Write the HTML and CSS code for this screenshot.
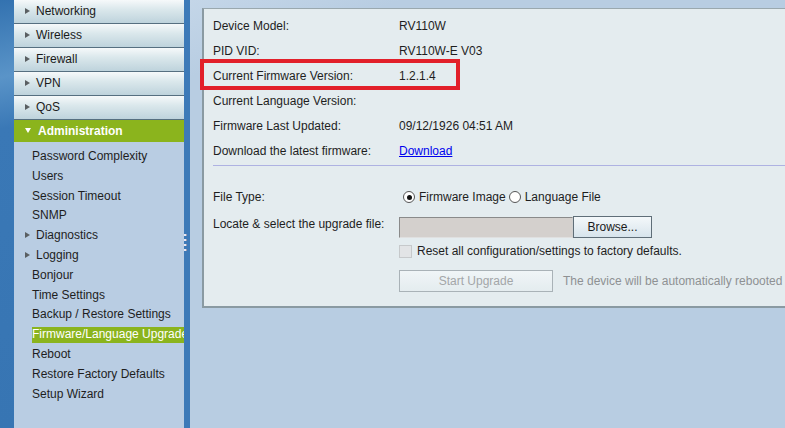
FILE: index.html
```html
<!DOCTYPE html>
<html lang="en">
<head>
    <meta charset="UTF-8">
    <title>Firmware/Language Upgrade</title>
    <link rel="stylesheet" href="styles.css">
</head>
<body>
    <div class="page">
        <div class="edge"></div>

        <!-- menu on the left -->
        <div class="nav">
            <div class="nav-head"><span class="arrow"></span>Networking</div>
            <div class="nav-head"><span class="arrow"></span>Wireless</div>
            <div class="nav-head"><span class="arrow"></span>Firewall</div>
            <div class="nav-head"><span class="arrow"></span>VPN</div>
            <div class="nav-head"><span class="arrow"></span>QoS</div>
            <div class="nav-head open"><span class="arrow down"></span>Administration</div>
            <ul class="sub">
                <li>Password Complexity</li>
                <li>Users</li>
                <li>Session Timeout</li>
                <li>SNMP</li>
                <li class="folder"><span class="arrow"></span>Diagnostics</li>
                <li class="folder"><span class="arrow"></span>Logging</li>
                <li>Bonjour</li>
                <li>Time Settings</li>
                <li>Backup / Restore Settings</li>
                <li class="current">Firmware/Language Upgrade</li>
                <li>Reboot</li>
                <li>Restore Factory Defaults</li>
                <li>Setup Wizard</li>
            </ul>
        </div>

        <div class="divider">
            <div class="grip"><i></i><i></i><i></i><i></i></div>
        </div>

        <div class="main">
            <div class="panel">
                <table class="info">
                    <tr><td>Device Model:</td><td>RV110W</td></tr>
                    <tr><td>PID VID:</td><td>RV110W-E V03</td></tr>
                    <tr><td>Current Firmware Version:</td><td>1.2.1.4</td></tr>
                    <tr><td>Current Language Version:</td><td></td></tr>
                    <tr><td>Firmware Last Updated:</td><td>09/12/1926 04:51 AM</td></tr>
                    <tr><td>Download the latest firmware:</td><td><a href="#">Download</a></td></tr>
                </table>

                <div class="sep"></div>

                <div class="upgrade">
                    <div class="row">
                        <div class="label">File Type:</div>
                        <div class="field">
                            <span class="radio on"></span>Firmware Image
                            <span class="radio"></span>Language File
                        </div>
                    </div>
                    <div class="row">
                        <div class="label">Locate &amp; select the upgrade file:</div>
                        <div class="field">
                            <span class="file-box"></span><span class="browse">Browse...</span>
                        </div>
                    </div>
                    <div class="row">
                        <div class="label"></div>
                        <div class="field">
                            <span class="check"></span>Reset all configuration/settings to factory defaults.
                        </div>
                    </div>
                    <div class="row">
                        <div class="label"></div>
                        <div class="field">
                            <span class="start">Start Upgrade</span>
                            <span class="note">The device will be automatically rebooted</span>
                        </div>
                    </div>
                </div>

                <!-- red box drawn round the firmware version -->
                <div class="mark"></div>
            </div>
        </div>
    </div>
</body>
</html>
```

FILE: styles.css
```css
body {
    margin: 0;
    font-family: "Liberation Sans", Arial, sans-serif;
    font-size: 12px;
    color: #1e1e1e;
    background: #b8cde2;
    overflow: hidden;
}
.page {
    display: flex;
    width: 785px;
    height: 428px;
}
.edge {
    flex: none;
    width: 14px;
    background: linear-gradient(170deg, #3372b0 0%, #5a94c8 18%, #3a78b6 30%, #3775b3 100%);
}
.nav {
    flex: none;
    width: 170px;
    background: #b9cde3;
    overflow: hidden;
}
.nav-head {
    height: 23px;
    line-height: 22px;
    border-bottom: 1px solid #566f80;
    background: linear-gradient(#f6f9fa, #dbe8ec 40%, #bed3dc);
    padding-left: 11px;
    color: #1a1a1a;
    white-space: nowrap;
}
.nav-head.open {
    height: 22px;
    background: #8bb41d;
    color: #fff;
    font-weight: bold;
    border-bottom: none;
}
.arrow {
    display: inline-block;
    width: 0;
    height: 0;
    border-left: 5px solid #5a5f62;
    border-top: 3px solid transparent;
    border-bottom: 3px solid transparent;
    margin-right: 6px;
    vertical-align: 1px;
}
.arrow.down {
    border-left: 3px solid transparent;
    border-right: 3px solid transparent;
    border-top: 5px solid #fff;
    border-bottom: none;
    margin-right: 7px;
    vertical-align: 2px;
}
.sub {
    list-style: none;
    margin: 0;
    padding: 5px 0 0 0;
}
.sub li {
    line-height: 19.8px;
    height: 19.8px;
    padding-left: 18px;
    white-space: nowrap;
    overflow: hidden;
}
.sub li.folder {
    padding-left: 11px;
}
.sub li.current {
    color: #fff;
    background: linear-gradient(#b9cde3 2px, #8bb41d 2px, #8bb41d 18px, #b9cde3 18px) no-repeat 18px 0;
}
.divider {
    flex: none;
    width: 6px;
    background: #3d7ab8;
    display: flex;
    align-items: center;
}
.grip {
    display: flex;
    flex-direction: column;
    gap: 3px;
    margin-top: 56px;
}
.grip i {
    display: block;
    width: 2px;
    height: 2px;
    background: #e8e8f2;
    border-right: 1px solid #9a9ab0;
}
.main {
    flex: 1;
    min-width: 0;
    padding: 8px 0 0 12px;
    background: linear-gradient(160deg, #c4d6e8 0%, #b8cde2 12%);
}
.panel {
    position: relative;
    height: 293px;
    margin-right: -40px;
    background: #e4ecef;
    border-left: 2px solid #8a9aa2;
    border-top: 1px solid #9aa8ae;
    border-bottom: 2px solid #8a9aa2;
    padding: 4px 0 0 9px;
}
.info {
    border-collapse: collapse;
}
.info td {
    height: 25px;
    padding: 0;
    vertical-align: middle;
}
.info td:first-child {
    width: 186px;
}
.info a {
    color: #0000ee;
}
.sep {
    height: 1px;
    background: #aeb2e2;
    margin-top: 2px;
}
.upgrade {
    padding-top: 20px;
}
.row {
    display: flex;
    align-items: center;
}
.row:nth-child(1) { height: 22px; margin-bottom: 8px; }
.row:nth-child(2) { height: 22px; margin-bottom: 2px; align-items: flex-start; }
.row:nth-child(3) { height: 22px; margin-bottom: 7px; }
.row:nth-child(4) { height: 24px; }
.row:nth-child(2) .label {
    padding-top: 1px;
}
.label {
    width: 186px;
    flex: none;
}
.field {
    display: flex;
    align-items: center;
    white-space: nowrap;
}
.radio {
    width: 10px;
    height: 10px;
    border: 1px solid #555;
    border-radius: 50%;
    background: #fff;
    margin: 0 4px 0 4px;
    position: relative;
}
.radio.on::after {
    content: "";
    position: absolute;
    left: 2.5px;
    top: 2.5px;
    width: 5px;
    height: 5px;
    border-radius: 50%;
    background: #111;
}
.field .radio:nth-of-type(2) {
    margin-left: 3px;
}
.file-box {
    width: 172px;
    height: 19px;
    background: #d4d0cd;
    border: 1px solid #8a8a8a;
    border-right-color: #d0d0d0;
    border-bottom-color: #e0e0e0;
}
.browse {
    width: 77px;
    height: 20px;
    line-height: 20px;
    text-align: center;
    border: 1px solid #5f6e78;
    background: linear-gradient(#f4f8fa, #d7e4ec);
    color: #1a1a1a;
}
.check {
    width: 11px;
    height: 11px;
    border: 1px solid #c6c9cb;
    background: #e2e4e6;
    margin-right: 5px;
}
.start {
    width: 152px;
    height: 20px;
    line-height: 20px;
    text-align: center;
    border: 1px solid #a9b2b7;
    background: linear-gradient(#f0f5f7, #e4ecef);
    color: #a3a6a8;
}
.note {
    margin-left: 10px;
    color: #8e9193;
}
.mark {
    position: absolute;
    left: -4px;
    top: 50px;
    width: 252px;
    height: 23px;
    border: 4px solid #e2202a;
}
```
